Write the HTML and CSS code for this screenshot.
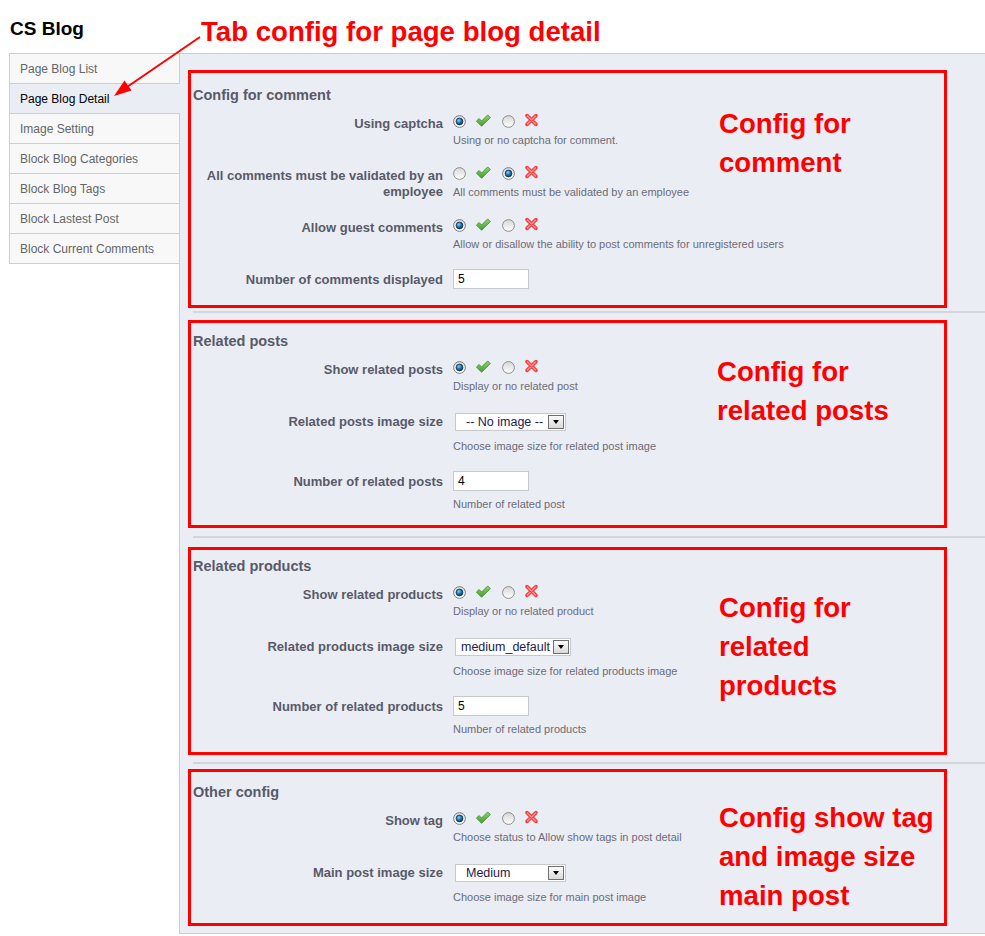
FILE: index.html
```html
<!DOCTYPE html>
<html>
<head>
<meta charset="utf-8">
<title>CS Blog</title>
<link rel="stylesheet" href="styles.css">
</head>
<body>
<svg class="sprite" aria-hidden="true">
  <defs>
    <radialGradient id="dot" cx="40%" cy="35%" r="70%">
      <stop offset="0" stop-color="#7fd0ff"/>
      <stop offset="0.55" stop-color="#1a6fae"/>
      <stop offset="1" stop-color="#05304f"/>
    </radialGradient>
    <linearGradient id="ring" x1="0" y1="0" x2="0" y2="1">
      <stop offset="0" stop-color="#d6d6d6"/>
      <stop offset="1" stop-color="#ffffff"/>
    </linearGradient>
    <linearGradient id="tickg" x1="0" y1="0" x2="0" y2="1">
      <stop offset="0" stop-color="#93d46f"/>
      <stop offset="1" stop-color="#429c30"/>
    </linearGradient>
    <symbol id="radio-off" viewBox="0 0 13 13">
      <circle cx="6.5" cy="6.5" r="5.9" fill="url(#ring)" stroke="#8c8d8e" stroke-width="1"/>
    </symbol>
    <symbol id="radio-on" viewBox="0 0 13 13">
      <circle cx="6.5" cy="6.5" r="5.9" fill="url(#ring)" stroke="#7d7e80" stroke-width="1"/>
      <circle cx="6.5" cy="6.5" r="3.4" fill="url(#dot)" stroke="#0b2c47" stroke-width="0.7"/>
    </symbol>
    <symbol id="tick" viewBox="0 0 16 16">
      <path d="M1.4 8.1 L4.1 5.5 L6.6 8 L12.7 1.9 L15.4 4.6 L6.6 13.3 Z" fill="url(#tickg)" stroke="#3b8b2a" stroke-width="0.8" stroke-linejoin="round"/>
    </symbol>
    <symbol id="cross" viewBox="0 0 16 16">
      <path d="M3 2.6 L12 11.4 M12 2.6 L3 11.4" stroke="#ec4343" stroke-width="3.6" stroke-linecap="round"/>
      <path d="M3.4 3 L11.6 11 M11.6 3 L3.4 11" stroke="#ff8c8c" stroke-width="1.2" stroke-linecap="round"/>
    </symbol>
  </defs>
</svg>

<header class="header">
  <h1 class="title">CS Blog</h1>
  <p class="tab-note">Tab config for page blog detail</p>
</header>

<svg class="arrow" width="210" height="110" viewBox="0 0 210 110" aria-hidden="true">
  <line x1="200" y1="37" x2="127" y2="87" stroke="#f00" stroke-width="2"/>
  <polygon points="114,96 131.5,90.5 124.5,80.5" fill="#f00"/>
</svg>

<div class="layout">
  <ul class="tabs">
    <li class="tab">Page Blog List</li>
    <li class="tab tab-active">Page Blog Detail</li>
    <li class="tab">Image Setting</li>
    <li class="tab">Block Blog Categories</li>
    <li class="tab">Block Blog Tags</li>
    <li class="tab">Block Lastest Post</li>
    <li class="tab">Block Current Comments</li>
  </ul>

  <main class="panel">
    <!-- Section 1 -->
    <section class="box box-1">
      <div class="box-body">
        <div class="form">
          <h2 class="legend">Config for comment</h2>
          <div class="row">
            <div class="label">Using captcha</div>
            <div class="ctl">
              <div class="opts">
                <svg class="radio"><use href="#radio-on"/></svg>
                <svg class="ico ico-yes"><use href="#tick"/></svg>
                <svg class="radio"><use href="#radio-off"/></svg>
                <svg class="ico"><use href="#cross"/></svg>
              </div>
              <p class="help">Using or no captcha for comment.</p>
            </div>
          </div>
          <div class="row">
            <div class="label">All comments must be validated by an employee</div>
            <div class="ctl">
              <div class="opts">
                <svg class="radio"><use href="#radio-off"/></svg>
                <svg class="ico ico-yes"><use href="#tick"/></svg>
                <svg class="radio"><use href="#radio-on"/></svg>
                <svg class="ico"><use href="#cross"/></svg>
              </div>
              <p class="help">All comments must be validated by an employee</p>
            </div>
          </div>
          <div class="row">
            <div class="label">Allow guest comments</div>
            <div class="ctl">
              <div class="opts">
                <svg class="radio"><use href="#radio-on"/></svg>
                <svg class="ico ico-yes"><use href="#tick"/></svg>
                <svg class="radio"><use href="#radio-off"/></svg>
                <svg class="ico"><use href="#cross"/></svg>
              </div>
              <p class="help">Allow or disallow the ability to post comments for unregistered users</p>
            </div>
          </div>
          <div class="row">
            <div class="label">Number of comments displayed</div>
            <div class="ctl">
              <div class="input">5</div>
            </div>
          </div>
        </div>
        <p class="note note-1">Config for<br>comment</p>
      </div>
    </section>

    <hr class="sep sep-1">

    <!-- Section 2 -->
    <section class="box box-2">
      <div class="box-body">
        <div class="form">
          <h2 class="legend">Related posts</h2>
          <div class="row">
            <div class="label">Show related posts</div>
            <div class="ctl">
              <div class="opts">
                <svg class="radio"><use href="#radio-on"/></svg>
                <svg class="ico ico-yes"><use href="#tick"/></svg>
                <svg class="radio"><use href="#radio-off"/></svg>
                <svg class="ico"><use href="#cross"/></svg>
              </div>
              <p class="help">Display or no related post</p>
            </div>
          </div>
          <div class="row">
            <div class="label">Related posts image size</div>
            <div class="ctl">
              <div class="select select-s">
                <span class="select-text">-- No image --</span>
                <span class="select-btn"><span class="caret"></span></span>
              </div>
              <p class="help">Choose image size for related post image</p>
            </div>
          </div>
          <div class="row">
            <div class="label">Number of related posts</div>
            <div class="ctl">
              <div class="input">4</div>
              <p class="help">Number of related post</p>
            </div>
          </div>
        </div>
        <p class="note note-2">Config for<br>related posts</p>
      </div>
    </section>

    <hr class="sep sep-2">

    <!-- Section 3 -->
    <section class="box box-3">
      <div class="box-body">
        <div class="form">
          <h2 class="legend">Related products</h2>
          <div class="row">
            <div class="label">Show related products</div>
            <div class="ctl">
              <div class="opts">
                <svg class="radio"><use href="#radio-on"/></svg>
                <svg class="ico ico-yes"><use href="#tick"/></svg>
                <svg class="radio"><use href="#radio-off"/></svg>
                <svg class="ico"><use href="#cross"/></svg>
              </div>
              <p class="help">Display or no related product</p>
            </div>
          </div>
          <div class="row">
            <div class="label">Related products image size</div>
            <div class="ctl">
              <div class="select select-m">
                <span class="select-text">medium_default</span>
                <span class="select-btn"><span class="caret"></span></span>
              </div>
              <p class="help">Choose image size for related products image</p>
            </div>
          </div>
          <div class="row">
            <div class="label">Number of related products</div>
            <div class="ctl">
              <div class="input">5</div>
              <p class="help">Number of related products</p>
            </div>
          </div>
        </div>
        <p class="note note-3">Config for<br>related<br>products</p>
      </div>
    </section>

    <hr class="sep sep-3">

    <!-- Section 4 -->
    <section class="box box-4">
      <div class="box-body">
        <div class="form">
          <h2 class="legend">Other config</h2>
          <div class="row">
            <div class="label">Show tag</div>
            <div class="ctl">
              <div class="opts">
                <svg class="radio"><use href="#radio-on"/></svg>
                <svg class="ico ico-yes"><use href="#tick"/></svg>
                <svg class="radio"><use href="#radio-off"/></svg>
                <svg class="ico"><use href="#cross"/></svg>
              </div>
              <p class="help">Choose status to Allow show tags in post detail</p>
            </div>
          </div>
          <div class="row">
            <div class="label">Main post image size</div>
            <div class="ctl">
              <div class="select select-s">
                <span class="select-text">Medium</span>
                <span class="select-btn"><span class="caret"></span></span>
              </div>
              <p class="help">Choose image size for main post image</p>
            </div>
          </div>
        </div>
        <p class="note note-4">Config show tag<br>and image size<br>main post</p>
      </div>
    </section>
  </main>
</div>
</body>
</html>
```

FILE: styles.css
```css
* {
  box-sizing: border-box;
}

html, body {
  margin: 0;
  padding: 0;
  background: #ffffff;
}

body {
  position: relative;
  font-family: "Liberation Sans", Arial, sans-serif;
  width: 985px;
  overflow: hidden;
}

.sprite {
  display: block;
  width: 0;
  height: 0;
  overflow: hidden;
}

/* Header */
.header {
  display: flex;
  align-items: flex-start;
  height: 53px;
}

.title {
  flex: 0 0 201px;
  margin: 0;
  padding: 18px 0 0 10px;
  font-size: 19px;
  line-height: 22px;
  font-weight: bold;
  color: #000;
}

.tab-note {
  margin: 0;
  padding-top: 16px;
  font-size: 27.6px;
  line-height: 32px;
  font-weight: bold;
  color: #ff0000;
  white-space: nowrap;
}

.arrow {
  position: absolute;
  left: 0;
  top: 0;
  z-index: 5;
  pointer-events: none;
}

/* Layout */
.layout {
  display: flex;
  align-items: flex-start;
}

.tabs {
  list-style: none;
  margin: 0 0 0 9px;
  padding: 0;
  flex: 0 0 171px;
  width: 171px;
  border-top: 1px solid #ccced7;
  position: relative;
  z-index: 1;
}

.tab {
  height: 30px;
  border-left: 1px solid #ccced7;
  border-right: 1px solid #ccced7;
  border-bottom: 1px solid #ccced7;
  background: #f8f8f8;
  padding-left: 10px;
  font-size: 12px;
  line-height: 30px;
  color: #666;
  white-space: nowrap;
}

.tab-active {
  background: #ebedf4;
  border-right-color: #ebedf4;
  color: #000;
}

.panel {
  flex: 1 1 auto;
  margin-left: -1px;
  background: #ebedf4;
  border-top: 1px solid #ccced7;
  border-left: 1px solid #ccced7;
  border-bottom: 1px solid #ccced7;
  padding: 0 0 7px 8px;
}

/* Red annotation boxes */
.box {
  width: 759px;
  border: 3px solid #ff0000;
}

.box-1 { margin-top: 16px; padding: 13px 0 16px; }
.box-2 { padding: 9px 0 14px; }
.box-3 { padding: 7px 0 16px; }
.box-4 { padding: 11px 0 19px; }

.sep {
  height: 2px;
  border: 0;
  margin: 0 0 0 5px;
  background: #d3d5dc;
}

.sep-1 { margin-top: 3px; margin-bottom: 7px; }
.sep-2 { margin-top: 8px; margin-bottom: 9px; }
.sep-3 { margin-top: 7px; margin-bottom: 5px; }

.box-body {
  display: grid;
  grid-template-columns: 526px 1fr;
  align-items: start;
  padding-left: 2px;
}

.legend {
  margin: 0 0 9px;
  font-size: 14.5px;
  line-height: 18px;
  font-weight: bold;
  color: #585a69;
}

.row {
  display: flex;
  align-items: flex-start;
  margin-bottom: 18px;
}

.row:last-child {
  margin-bottom: 0;
}

.label {
  flex: 0 0 250px;
  width: 250px;
  padding-top: 3px;
  margin-bottom: -1px;
  text-align: right;
  font-size: 13px;
  line-height: 16px;
  font-weight: bold;
  color: #585a69;
}

.ctl {
  margin-left: 10px;
}

.opts {
  display: flex;
  align-items: center;
  height: 16px;
}

.radio {
  width: 13px;
  height: 13px;
  margin-right: 9px;
}

.ico {
  width: 16px;
  height: 16px;
}

.ico-yes {
  margin-right: 11px;
}

.help {
  margin: 4px 0 0;
  font-size: 11px;
  line-height: 14px;
  color: #6b6c78;
  white-space: nowrap;
}

.input {
  width: 76px;
  height: 20px;
  border: 1px solid #c8c9cc;
  background: #fff;
  padding-left: 4px;
  font-size: 12px;
  line-height: 18px;
  color: #000;
}

.input + .help {
  margin-top: 6px;
}

.select {
  display: flex;
  align-items: flex-end;
  justify-content: space-between;
  height: 18px;
  margin: 2px 0 0 2px;
  border: 1px solid #c8c9cc;
  background: #fff;
  font-size: 12.5px;
  color: #1d1a4e;
}

.select-s {
  width: 111px;
  padding-left: 10px;
}

.select-m {
  width: 116px;
  padding-left: 5px;
}

.select-text {
  align-self: center;
  line-height: 16px;
  white-space: nowrap;
}

.select-btn {
  display: flex;
  align-items: center;
  justify-content: center;
  width: 16px;
  height: 14px;
  margin: 0 1px 1px 0;
  border: 1px solid #6e6e6e;
  background: linear-gradient(#fbfbfb, #d9d9d9);
}

.caret {
  width: 0;
  height: 0;
  border-left: 3.5px solid transparent;
  border-right: 3.5px solid transparent;
  border-top: 4px solid #000;
}

.select + .help {
  margin-top: 8px;
}

/* Annotation text */
.note {
  margin: 0;
  font-size: 27.6px;
  line-height: 39px;
  font-weight: bold;
  color: #ff0000;
  white-space: nowrap;
}

.note-1 { margin-top: 18px; }
.note-2 { margin-top: 20px; margin-left: -2px; }
.note-3 { margin-top: 31px; }
.note-4 { margin-top: 15px; margin-bottom: -12px; }
```
